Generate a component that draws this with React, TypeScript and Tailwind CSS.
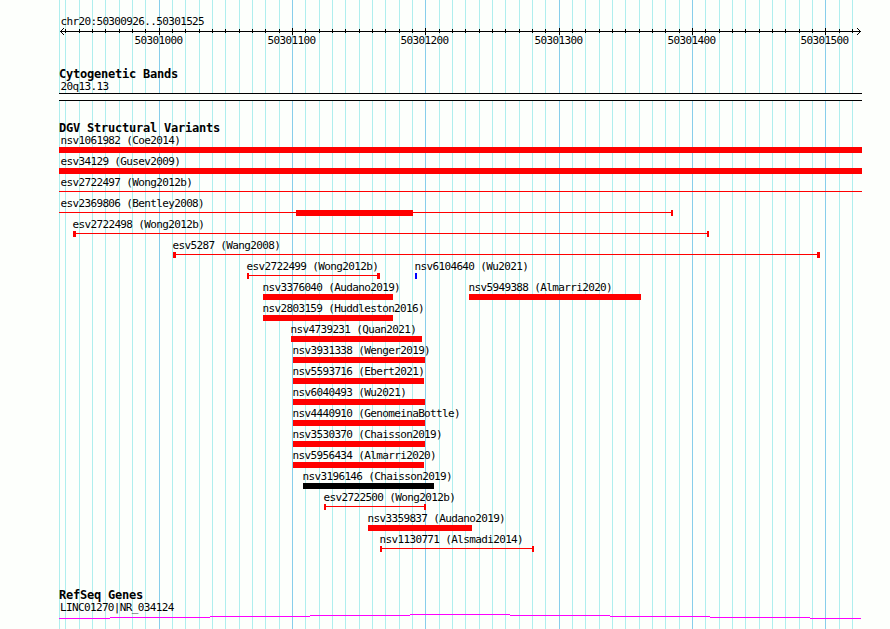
type Feature = {
  name: string;
  start: number;
  end: number;
  kind: "bar" | "line";
  color?: string;
  leftCap?: number;
  rightCap?: number;
  block?: [number, number];
};

const LEFT = 59;
const RIGHT = 862;
const RED = "#ff0000";

const majorTicks = [
  { x: 159, label: "50301000" },
  { x: 292, label: "50301100" },
  { x: 425, label: "50301200" },
  { x: 559, label: "50301300" },
  { x: 692, label: "50301400" },
  { x: 825, label: "50301500" },
];

// one tick for every 10 bp
const ticks = Array.from({ length: 60 }, (_, i) => ({
  x: Math.floor(159.1 + ((i - 7) * 40) / 3),
  major: (i - 7) % 10 === 0,
}));

const rows: Feature[][] = [
  [{ name: "nsv1061982 (Coe2014)", start: LEFT, end: RIGHT, kind: "bar" }],
  [{ name: "esv34129 (Gusev2009)", start: LEFT, end: RIGHT, kind: "bar" }],
  [{ name: "esv2722497 (Wong2012b)", start: LEFT, end: RIGHT, kind: "line" }],
  [
    {
      name: "esv2369806 (Bentley2008)",
      start: LEFT,
      end: 673,
      kind: "line",
      rightCap: 2,
      block: [296, 413],
    },
  ],
  [{ name: "esv2722498 (Wong2012b)", start: 73, end: 709, kind: "line", leftCap: 3, rightCap: 2 }],
  [{ name: "esv5287 (Wang2008)", start: 173, end: 820, kind: "line", leftCap: 3, rightCap: 3 }],
  [
    { name: "esv2722499 (Wong2012b)", start: 247, end: 380, kind: "line", leftCap: 2, rightCap: 3 },
    { name: "nsv6104640 (Wu2021)", start: 415, end: 417, kind: "bar", color: "#0000ff" },
  ],
  [
    { name: "nsv3376040 (Audano2019)", start: 263, end: 393, kind: "bar" },
    { name: "nsv5949388 (Almarri2020)", start: 469, end: 641, kind: "bar" },
  ],
  [{ name: "nsv2803159 (Huddleston2016)", start: 263, end: 393, kind: "bar" }],
  [{ name: "nsv4739231 (Quan2021)", start: 291, end: 422, kind: "bar" }],
  [{ name: "nsv3931338 (Wenger2019)", start: 293, end: 425, kind: "bar" }],
  [{ name: "nsv5593716 (Ebert2021)", start: 293, end: 424, kind: "bar" }],
  [{ name: "nsv6040493 (Wu2021)", start: 293, end: 425, kind: "bar" }],
  [{ name: "nsv4440910 (GenomeinaBottle)", start: 293, end: 425, kind: "bar" }],
  [{ name: "nsv3530370 (Chaisson2019)", start: 293, end: 425, kind: "bar" }],
  [{ name: "nsv5956434 (Almarri2020)", start: 293, end: 424, kind: "bar" }],
  [{ name: "nsv3196146 (Chaisson2019)", start: 303, end: 434, kind: "bar", color: "#000000" }],
  [{ name: "esv2722500 (Wong2012b)", start: 324, end: 426, kind: "line", leftCap: 2, rightCap: 2 }],
  [{ name: "nsv3359837 (Audano2019)", start: 368, end: 472, kind: "bar" }],
  [{ name: "nsv1130771 (Alsmadi2014)", start: 380, end: 534, kind: "line", leftCap: 2, rightCap: 2 }],
];

// the transcript line climbs and falls one pixel at a time
const geneSteps = [
  [59, 110, 4],
  [110, 210, 3],
  [210, 310, 2],
  [310, 410, 1],
  [410, 510, 0],
  [510, 610, 1],
  [610, 710, 2],
  [710, 810, 3],
  [810, 861, 4],
];

const labelClass =
  "h-3 whitespace-nowrap text-[11px] leading-[12px] tracking-[-0.64px] font-['DejaVu_Sans_Mono',monospace]";

const Heading = ({ children }: { children: string }) => (
  <h2 className="h-3 whitespace-nowrap text-[12px] font-bold leading-[10px] tracking-[-0.224px] font-['DejaVu_Sans_Mono',monospace]">
    {children}
  </h2>
);

const Grid = () => (
  <svg
    className="absolute inset-0"
    width="890"
    height="629"
    shapeRendering="crispEdges"
  >
    <rect x={LEFT} y="0" width="1" height="629" fill="#afeeee" />
    {ticks.map((tick) => (
      <rect
        key={tick.x}
        x={tick.x}
        y="0"
        width="1"
        height="629"
        fill={tick.major ? "#87ceeb" : "#afeeee"}
      />
    ))}
  </svg>
);

const Ruler = () => (
  <div>
    <div className={`${labelClass} pl-[60.5px]`}>chr20:50300926..50301525</div>
    <svg
      className="block"
      width="890"
      height="7"
      shapeRendering="crispEdges"
    >
      <rect x="60" y="3" width="801" height="1" />
      {[1, 2, 3].map((n) => (
        <g key={n}>
          <rect x={60 + n} y={3 - n} width="1" height="1" />
          <rect x={60 + n} y={3 + n} width="1" height="1" />
          <rect x={860 - n} y={3 - n} width="1" height="1" />
          <rect x={860 - n} y={3 + n} width="1" height="1" />
        </g>
      ))}
      {ticks.map((tick) => (
        <rect
          key={tick.x}
          x={tick.x}
          y={tick.major ? 0 : 1}
          width="1"
          height={tick.major ? 7 : 4}
        />
      ))}
    </svg>
    <div className="flex">
      {majorTicks.map((tick, i) => (
        <div
          key={tick.x}
          className={`${labelClass} w-12 shrink-0`}
          style={{
            marginLeft: tick.x - 24.5 - (i ? majorTicks[i - 1].x + 23.5 : 0),
          }}
        >
          {tick.label}
        </div>
      ))}
    </div>
  </div>
);

const Glyph = ({ feature }: { feature: Feature }) => {
  const { start, end, kind, leftCap, rightCap, block, color = RED } = feature;
  const width = end - start;

  return (
    <svg
      className="block"
      width={width}
      height="6"
      fill={color}
      shapeRendering="crispEdges"
    >
      {kind === "bar" ? (
        <rect width={width} height="6" />
      ) : (
        <rect y="2" width={width} height="1" />
      )}
      {leftCap && <rect width={leftCap} height="6" />}
      {rightCap && <rect x={width - rightCap} width={rightCap} height="6" />}
      {block && (
        <rect x={block[0] - start} width={block[1] - block[0]} height="6" />
      )}
    </svg>
  );
};

const FeatureRow = ({ features }: { features: Feature[] }) => (
  <div className="flex h-[21px]">
    {features.map((feature, i) => (
      <div
        key={feature.name}
        className="shrink-0"
        style={{
          marginLeft: feature.start - (i ? features[i - 1].end : 0),
          width: feature.end - feature.start,
        }}
      >
        <div
          className={`${labelClass} ${feature.start === LEFT ? "ml-[1.5px]" : "-ml-[0.5px]"}`}
        >
          {feature.name}
        </div>
        <Glyph feature={feature} />
      </div>
    ))}
  </div>
);

export default function App() {
  return (
    <div className="relative h-[629px] w-[890px] overflow-hidden bg-[#fdfffc] text-black">
      <Grid />

      <main className="relative flex flex-col pt-4">
        <Ruler />

        <section className="mt-[22px]">
          <div className="pl-[59px]">
            <Heading>Cytogenetic Bands</Heading>
            <div className={`${labelClass} pl-[1.5px]`}>20q13.13</div>
            <div className="h-2 w-[803px] border-y border-black bg-[#fdfffc]" />
          </div>
        </section>

        <section className="mt-[22px]">
          <div className="pl-[59px]">
            <Heading>DGV Structural Variants</Heading>
          </div>
          {rows.map((features) => (
            <FeatureRow key={features[0].name} features={features} />
          ))}
        </section>

        <section className="mt-[35px]">
          <div className="pl-[59px]">
            <Heading>RefSeq Genes</Heading>
            <div className={`${labelClass} pl-px`}>LINC01270|NR_034124</div>
          </div>
          <svg
            className="block"
            width="890"
            height="5"
            fill="#ff00ff"
            shapeRendering="crispEdges"
          >
            {geneSteps.map(([from, to, y]) => (
              <rect key={from} x={from} y={y} width={to - from} height="1" />
            ))}
          </svg>
        </section>
      </main>
    </div>
  );
}
